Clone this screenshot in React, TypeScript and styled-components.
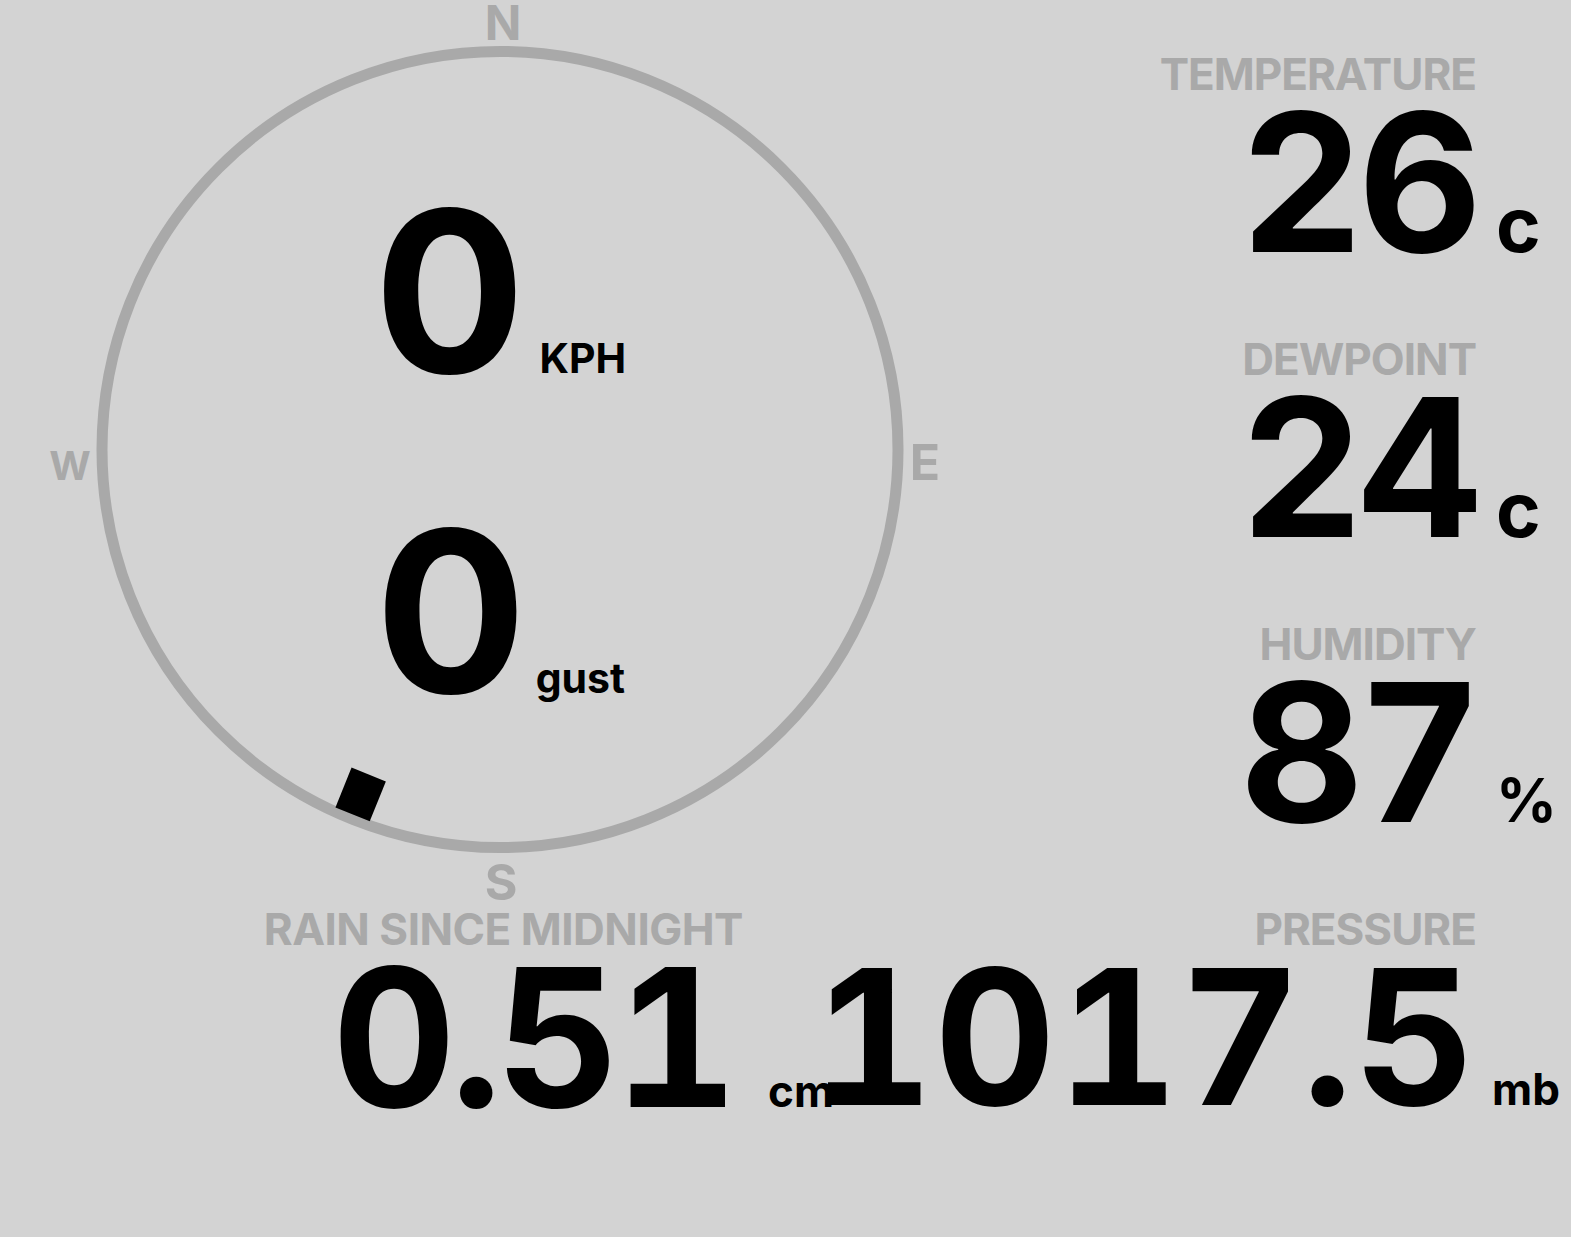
import styled, {createGlobalStyle} from 'styled-components';

const GlobalStyle = createGlobalStyle`
    html, body {
        margin: 0;
        padding: 0;
        background: #d3d3d3;
    }
    body {
        font-family: Inter, "Noto Sans", "DejaVu Sans", sans-serif;
        color: #000;
    }
`;

const Page = styled.div`
    width: 1571px;
    height: 1237px;
    overflow: hidden;
    display: flex;
    flex-direction: column;
    background: #d3d3d3;
`;

const TopSection = styled.div`
    display: grid;
    grid-template-columns: 1000px 1fr;
    height: 907px;
`;

const Compass = styled.div`
    position: relative;
    height: 907px;
    box-sizing: border-box;
    padding-top: 131px;
    display: flex;
    flex-direction: column;
    align-items: center;
`;

const Ring = styled.svg`
    position: absolute;
    left: 0;
    top: 0;
    width: 1000px;
    height: 907px;
    text {
        font-family: Inter, "Noto Sans", sans-serif;
        font-weight: 700;
        fill: #a9a9a9;
    }
`;

const Reading = styled.div`
    position: relative;
    display: flex;
    align-items: baseline;
    height: 320px;
`;

const BigDigit = styled.span`
    font-size: 225px;
    font-weight: 700;
    line-height: 320px;
`;

const SmallUnit = styled.span<{$gap: number}>`
    font-size: 41px;
    font-weight: 700;
    margin-left: ${p => p.$gap}px;
`;

const StatsColumn = styled.div`
    display: flex;
    flex-direction: column;
    padding-top: 52px;
    gap: 80px;
`;

const Stat = styled.div<{$width?: number; $grow?: boolean}>`
    display: flex;
    flex-direction: column;
    align-items: flex-end;
    gap: 10px;
    min-width: 0;
    width: ${p => (p.$width ? `${p.$width}px` : 'auto')};
    flex: ${p => (p.$grow ? '1' : 'none')};
`;

const Label = styled.div<{$offset: number; $spacing?: number}>`
    font-size: 44px;
    line-height: 45px;
    font-weight: 700;
    letter-spacing: ${p => p.$spacing ?? -1}px;
    color: #a9a9a9;
    white-space: nowrap;
    margin-right: ${p => p.$offset}px;
`;

const ValueRow = styled.div`
    display: flex;
    align-items: baseline;
    height: 150px;
`;

const Value = styled.span<{$size: number; $spacing: number}>`
    font-size: ${p => p.$size}px;
    line-height: 150px;
    font-weight: 700;
    font-variant-numeric: tabular-nums;
    letter-spacing: ${p => p.$spacing}px;
    white-space: nowrap;
`;

const Unit = styled.span<{$size: number; $slot: number; $pad: number}>`
    flex: none;
    font-size: ${p => p.$size}px;
    line-height: 1;
    font-weight: 700;
    width: ${p => p.$slot}px;
    padding-left: ${p => p.$pad}px;
    box-sizing: border-box;
    white-space: nowrap;
`;

const BottomRow = styled.div`
    display: flex;
`;

const stats = [
    {label: 'TEMPERATURE', value: '26', unit: 'c', unitSize: 76},
    {label: 'DEWPOINT', value: '24', unit: 'c', unitSize: 76},
    {label: 'HUMIDITY', value: '87', unit: '%', unitSize: 60},
];

const CX = 500;
const CY = 449.5;
const windDirection = 202;

const CompassRing: React.FC = () => {
    return <Ring viewBox="0 0 1000 907">
        <circle cx={CX} cy={CY} r={398} fill="none" stroke="#a9a9a9" strokeWidth={11} />
        <text x={503} y={40} fontSize={48} textAnchor="middle">N</text>
        <text x={925} y={480} fontSize={50} textAnchor="middle">E</text>
        <text x={501} y={900} fontSize={50} textAnchor="middle">S</text>
        <text x={70} y={480} fontSize={40} textAnchor="middle">W</text>
        <rect
            x={CX - 18.5}
            y={CY - 372 - 21.5}
            width={37}
            height={43}
            fill="#000"
            transform={`rotate(${windDirection} ${CX} ${CY})`}
        />
    </Ring>;
};

const App: React.FC = () => {
    return <>
        <GlobalStyle />
        <Page>
            <TopSection>
                <Compass>
                    <CompassRing />
                    <Reading>
                        <BigDigit>0</BigDigit>
                        <SmallUnit $gap={14}>KPH</SmallUnit>
                    </Reading>
                    <Reading>
                        <BigDigit>0</BigDigit>
                        <SmallUnit $gap={9}>gust</SmallUnit>
                    </Reading>
                </Compass>
                <StatsColumn>
                    {stats.map(s => (
                        <Stat key={s.label}>
                            <Label $offset={95}>{s.label}</Label>
                            <ValueRow>
                                <Value $size={192} $spacing={-6}>{s.value}</Value>
                                <Unit $size={s.unitSize} $slot={95} $pad={20}>{s.unit}</Unit>
                            </ValueRow>
                        </Stat>
                    ))}
                </StatsColumn>
            </TopSection>
            <BottomRow>
                <Stat $width={832}>
                    <Label $offset={89} $spacing={-0.5}>RAIN SINCE MIDNIGHT</Label>
                    <ValueRow>
                        <Value $size={192} $spacing={-6}>0.51</Value>
                        <Unit $size={44} $slot={100} $pad={36}>cm</Unit>
                    </ValueRow>
                </Stat>
                <Stat $grow>
                    <Label $offset={95}>PRESSURE</Label>
                    <ValueRow>
                        <Value $size={188} $spacing={1}>1017.5</Value>
                        <Unit $size={44} $slot={95} $pad={16}>mb</Unit>
                    </ValueRow>
                </Stat>
            </BottomRow>
        </Page>
    </>;
};

export default App;
